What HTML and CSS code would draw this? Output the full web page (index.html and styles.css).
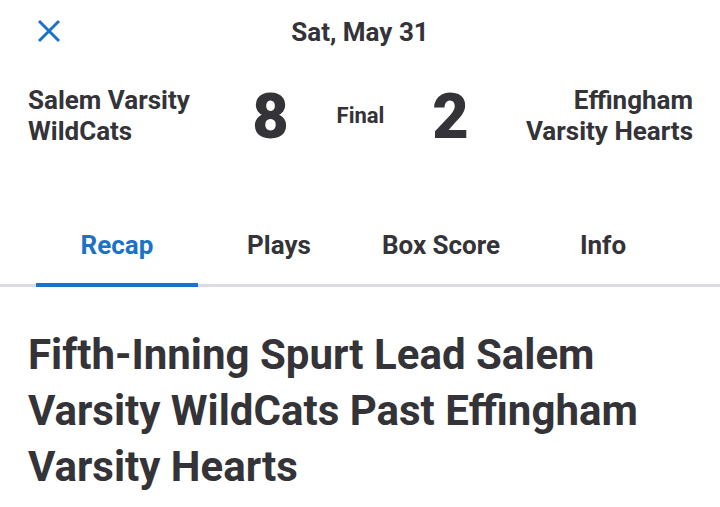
FILE: index.html
```html
<!DOCTYPE html>
<html>
<head>
<meta charset="utf-8">
<link rel="stylesheet" href="styles.css">
</head>
<body>
<div class="page">
  <header class="topbar">
    <button class="close" aria-label="Close">
      <svg width="24" height="24" viewBox="0 0 24 24"><path d="M2 2 L22 22 M22 2 L2 22" stroke="#1a73c8" stroke-width="3" stroke-linecap="butt" fill="none"/></svg>
    </button>
    <div class="date">Sat, May 31</div>
  </header>
  <section class="score">
    <div class="team team-home">Salem Varsity<br>WildCats</div>
    <div class="center">
      <div class="runs">8</div>
      <div class="status">Final</div>
      <div class="runs">2</div>
    </div>
    <div class="team team-away">Effingham<br>Varsity Hearts</div>
  </section>
  <nav class="tabs">
    <div class="tab active">Recap</div>
    <div class="tab">Plays</div>
    <div class="tab">Box Score</div>
    <div class="tab">Info</div>
  </nav>
  <article class="recap">
    <h1 class="headline">Fifth-Inning Spurt Lead Salem Varsity WildCats Past Effingham Varsity Hearts</h1>
  </article>
</div>
</body>
</html>
```
FILE: styles.css
```css
* { box-sizing: border-box; }
html, body { margin: 0; padding: 0; background: #fff; }
body {
  font-family: Roboto, "Liberation Sans", sans-serif;
  color: #333338;
  width: 720px;
  height: 507px;
  overflow: hidden;
}
.topbar {
  height: 64px;
  display: flex;
  align-items: center;
  position: relative;
  justify-content: center;
}
.close {
  position: absolute;
  left: 37px;
  top: 19px;
  border: 0;
  padding: 0;
  background: none;
  width: 24px;
  height: 24px;
  display: block;
}
.close svg { display: block; }
.date {
  font-size: 26px;
  font-weight: 700;
}
.score {
  display: flex;
  align-items: flex-start;
  padding: 21px 27px 0 28px;
  height: 143px;
}
.team {
  flex: 1;
  font-size: 26px;
  font-weight: 700;
  line-height: 31px;
}
.team-away { text-align: right; }
.center {
  display: flex;
  align-items: flex-start;
  margin: 0 -3px;
}
.runs {
  width: 40px;
  text-align: center;
  font-size: 63px;
  font-weight: 900;
  line-height: 64px;
}
.status {
  width: 140px;
  text-align: center;
  font-size: 22px;
  font-weight: 700;
  margin-top: 18px;
}
.tabs {
  display: flex;
  padding: 0 36px;
  height: 80px;
  align-items: stretch;
  border-bottom: 3px solid #dadbe3;
}
.tab {
  flex: 1;
  font-size: 26px;
  font-weight: 700;
  display: flex;
  align-items: center;
  justify-content: center;
  border-bottom: 4px solid transparent;
  margin-bottom: -3px;
}
.tab.active {
  color: #1a73c8;
  border-bottom-color: #1a73c8;
}
.recap { padding: 40px 28px 0 28px; }
.headline {
  margin: 0;
  font-size: 42px;
  line-height: 56px;
  font-weight: 700;
}
```
